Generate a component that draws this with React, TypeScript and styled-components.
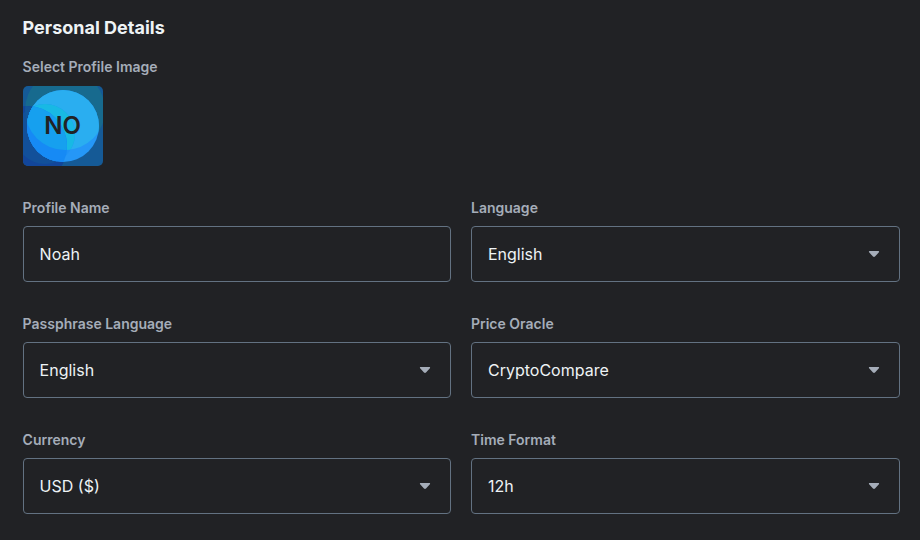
import React from "react";
import styled, { createGlobalStyle } from "styled-components";

const GlobalStyle = createGlobalStyle`
  * { box-sizing: border-box; }
  body { margin: 0; background: #212225; font-family: Inter, sans-serif; }
`;

const Page = styled.main`
  height: 540px;
  padding: 16px 20px 0 22.6px;
  background: #212225;
  overflow: hidden;
`;

const Title = styled.h2`
  margin: 0;
  color: #eef3f5;
  font-size: 18px;
  line-height: 24px;
  font-weight: 700;
`;

const Label = styled.label`
  display: block;
  color: #a5adb9;
  font-size: 14px;
  line-height: 18px;
  font-weight: 600;
`;

const ImageField = styled.section`
  margin-top: 18px;
`;

const Avatar = styled.svg`
  display: block;
  width: 80px;
  height: 80px;
  margin-top: 10px;
  border-radius: 5px;
`;

const Fields = styled.div`
  display: grid;
  grid-template-columns: 428.4px 429px;
  column-gap: 20px;
  row-gap: 33px;
  margin-top: 33px;
`;

const Control = styled.div`
  display: flex;
  align-items: center;
  justify-content: space-between;
  height: 56px;
  margin-top: 9px;
  padding: 0 19px 0 16px;
  border: 1px solid #637282;
  border-radius: 4px;
  color: #eef3f5;
  font-size: 16px;
  line-height: 24px;
`;

const Caret = styled.svg`
  width: 12px;
  height: 8px;
  fill: #a5adb9;
`;

const fields = [
  { label: "Profile Name", value: "Noah", select: false },
  { label: "Language", value: "English", select: true },
  { label: "Passphrase Language", value: "English", select: true },
  { label: "Price Oracle", value: "CryptoCompare", select: true },
  { label: "Currency", value: "USD ($)", select: true },
  { label: "Time Format", value: "12h", select: true },
];

interface DiscColors {
  base: string;
  top: string;
  middle: string;
  middleTop: string;
  low: string;
  lowMiddle: string;
  lowTop: string;
}

const outerColors: DiscColors = {
  base: "#155a96",
  top: "#176a8e",
  middle: "#155a96",
  middleTop: "#176a8e",
  low: "#12469a",
  lowMiddle: "#12509a",
  lowTop: "#12559a",
};

const faceColors: DiscColors = {
  base: "#2597f7",
  top: "#2aaef0",
  middle: "#2092f6",
  middleTop: "#18b9e4",
  low: "#168af5",
  lowMiddle: "#168af5",
  lowTop: "#16a0ef",
};

function Discs({ colors }: { colors: DiscColors }) {
  return (
    <>
      <rect width="80" height="80" fill={colors.base} />
      <circle cx="42" cy="24" r="40" fill={colors.top} />
      <g clipPath="url(#middleDisc)">
        <rect width="80" height="80" fill={colors.middle} />
        <circle cx="42" cy="24" r="40" fill={colors.middleTop} />
      </g>
      <g clipPath="url(#lowDisc)">
        <rect width="80" height="80" fill={colors.low} />
        <circle cx="22" cy="48" r="30" fill={colors.lowMiddle} />
        <circle cx="42" cy="24" r="40" fill={colors.lowTop} />
      </g>
    </>
  );
}

function ProfileAvatar() {
  return (
    <Avatar viewBox="0 0 80 80">
      <defs>
        <clipPath id="middleDisc"><circle cx="22" cy="48" r="30" /></clipPath>
        <clipPath id="lowDisc"><circle cx="4" cy="60" r="40" /></clipPath>
        <clipPath id="face"><circle cx="40" cy="40" r="36" /></clipPath>
      </defs>
      <Discs colors={outerColors} />
      <g clipPath="url(#face)">
        <Discs colors={faceColors} />
      </g>
      <text x="39.5" y="48" textAnchor="middle" fontSize="24" fontWeight="600" fill="#212225">NO</text>
    </Avatar>
  );
}

export default function App() {
  return (
    <>
      <GlobalStyle />
      <Page>
        <Title>Personal Details</Title>
        <ImageField>
          <Label as="span">Select Profile Image</Label>
          <ProfileAvatar />
        </ImageField>
        <Fields>
          {fields.map((field) => (
            <div key={field.label}>
              <Label>{field.label}</Label>
              <Control>
                <span>{field.value}</span>
                {field.select && (
                  <Caret viewBox="0 0 12 8">
                    <path d="M1.6 1h8.8c.7 0 1 .7.5 1.2L7 6.6c-.6.6-1.4.6-2 0L1.1 2.2C.6 1.7.9 1 1.6 1z" />
                  </Caret>
                )}
              </Control>
            </div>
          ))}
        </Fields>
      </Page>
    </>
  );
}
